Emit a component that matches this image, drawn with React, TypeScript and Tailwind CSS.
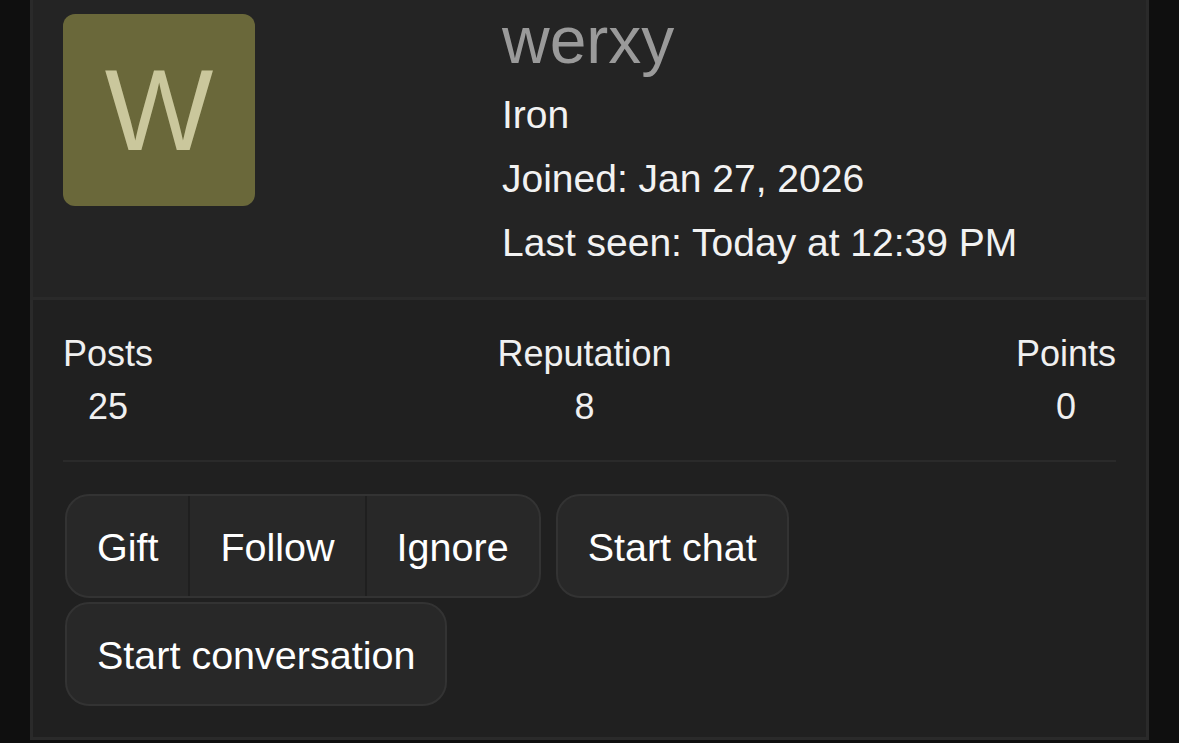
import React from 'react'

const stats = [
  { label: 'Posts', value: '25' },
  { label: 'Reputation', value: '8' },
  { label: 'Points', value: '0' },
]

const infoLines = ['Iron', 'Joined: Jan 27, 2026', 'Last seen: Today at 12:39 PM']

function ProfileHeader() {
  return (
    <div className="flex items-start border-b-[3px] border-[#2a2a2a] bg-[#242424] px-[30px] pb-[22px] pt-[7px]">
      <div className="mt-[7px] flex h-[192px] w-[192px] shrink-0 items-center justify-center rounded-[12px] bg-[#6a683a] text-[115px] leading-none text-[#cac79c]">
        W
      </div>
      <div className="ml-[247px] flex flex-col">
        <h2 className="text-[66px] leading-[66px] text-[#9a9a9a]">werxy</h2>
        <div className="mt-[10px] flex flex-col text-[39px] leading-[64px] text-[#f2f2f2]">
          {infoLines.map((line) => (
            <p key={line}>{line}</p>
          ))}
        </div>
      </div>
    </div>
  )
}

function StatsRow() {
  return (
    <div className="flex justify-between border-b-2 border-[#2a2a2a] pb-[31px]">
      {stats.map((s) => (
        <div key={s.label} className="flex flex-col gap-[9px] text-center text-[36px] leading-[44px] text-[#f0f0f0]">
          <span>{s.label}</span>
          <span>{s.value}</span>
        </div>
      ))}
    </div>
  )
}

function ActionButtons() {
  const btn = 'flex items-center px-[30px] pt-[4px] text-[39.5px] leading-none text-white'
  const solo = `${btn} h-[104px] rounded-[24px] border-2 border-[#333] bg-[#282828]`
  return (
    <div className="ml-[2px] mt-[32px] flex flex-wrap gap-x-[15px] gap-y-[4px]">
      <div className="flex overflow-hidden rounded-[24px] border-2 border-[#333] bg-[#282828]">
        <button className={`${btn} h-[100px]`}>Gift</button>
        <button className={`${btn} h-[100px] border-l-2 border-[#1f1f1f]`}>Follow</button>
        <button className={`${btn} h-[100px] border-l-2 border-[#1f1f1f]`}>Ignore</button>
      </div>
      <button className={solo}>Start chat</button>
      <button className={solo}>Start conversation</button>
    </div>
  )
}

export default function App() {
  return (
    <div className="h-[743px] overflow-hidden bg-[#0f0f0f] px-[30px] font-['Liberation_Sans',Arial,sans-serif]">
      <div className="flex flex-col border-x-[3px] border-b-[3px] border-[#2a2a2a] bg-[#202020]">
        <ProfileHeader />
        <div className="px-[30px] pb-[31px] pt-[32px]">
          <StatsRow />
          <ActionButtons />
        </div>
      </div>
    </div>
  )
}
